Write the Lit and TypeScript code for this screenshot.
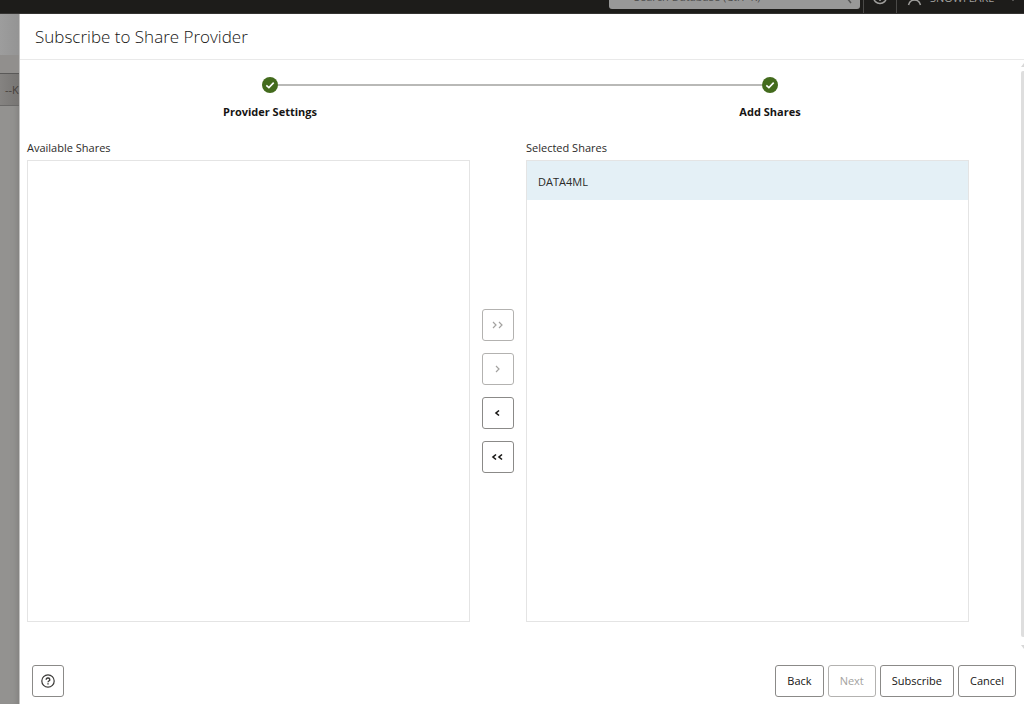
import { LitElement, html, css, svg } from "lit";
import { customElement, state } from "lit/decorators.js";

const chevron = (double: boolean, left: boolean) => {
  const one = (x: number) =>
    left ? svg`<path d="M${x + 3} 4.5 L${x} 7 L${x + 3} 9.5"/>` : svg`<path d="M${x} 4 L${x + 3} 7 L${x} 10"/>`;
  return html`<svg class=${left ? "chev" : "chev thin"} viewBox="0 0 14 14" width="14" height="14" aria-hidden="true">
    ${double ? [one(2), one(8)] : one(5)}
  </svg>`;
};

@customElement("app-topbar")
export class AppTopbar extends LitElement {
  static styles = css`
    :host {
      display: flex;
      align-items: flex-end;
      justify-content: flex-end;
      height: 14px;
      flex: none;
      overflow: hidden;
      box-sizing: border-box;
      background: #1d1c1a;
      border-bottom: 1px solid #343331;
      font: 11px/16px "Open Sans", "Noto Sans", sans-serif;
      color: #a09f9d;
    }
    .bar {
      display: flex;
      align-items: flex-end;
      height: 46px;
      flex: none;
    }
    .search {
      display: flex;
      align-items: flex-end;
      width: 251px;
      height: 32px;
      margin: 0 3px 4px 0;
      border-radius: 3px;
      background: #989898;
      box-sizing: border-box;
      padding: 0 7px 4px 25px;
    }
    .search input {
      flex: 1;
      min-width: 0;
      height: 16px;
      border: 0;
      background: none;
      padding: 0;
      font: inherit;
      outline: none;
    }
    .search input::placeholder {
      color: #4f4f4f;
      opacity: 1;
    }
    .cell {
      display: flex;
      align-items: flex-end;
      height: 100%;
      border-left: 1px solid #4b4a48;
      box-sizing: border-box;
      padding: 0 8px 8px;
    }
    .user {
      gap: 8px;
      padding: 0 6px 7px 10px;
    }
    svg {
      display: block;
      fill: none;
      stroke: currentColor;
      stroke-width: 1.5;
    }
    .name {
      width: 66px;
    }
    .caret {
      fill: currentColor;
      stroke: none;
      margin: 0 0 4px 4px;
    }
  `;
  render() {
    return html`<div class="bar">
      <label class="search">
        <input type="text" aria-label="Search Database" placeholder="Search Database (Ctrl+K)" />
        <svg width="8" height="14" viewBox="0 0 8 14"><path d="M6 12 L2 7" stroke="#555" /></svg>
      </label>
      <div class="cell">
        <svg width="16" height="16" viewBox="0 0 16 16"><circle cx="8" cy="8" r="6.5" /><path d="M6 6a2 2 0 1 1 2 2.500v1M8 10.500v1.500" /></svg>
      </div>
      <div class="cell user">
        <svg width="15" height="16" viewBox="0 0 15 16"><circle cx="7.500" cy="6" r="3.500" /><path d="M1.500 15c1-3.500 3-5 6-5s5 1.500 6 5" /></svg>
        <span class="name">SNOWFLAKE</span>
        <svg class="caret" width="10" height="6" viewBox="0 0 10 6"><path d="M1 0h8L5 5z" /></svg>
      </div>
    </div>`;
  }
}

@customElement("app-root")
export class AppRoot extends LitElement {
  @state() private available: string[] = [];
  @state() private selected: string[] = ["DATA4ML"];

  static styles = css`
    :host {
      display: flex;
      flex-direction: column;
      height: 100vh;
      overflow: hidden;
      font: 11px/16px "Open Sans", "Noto Sans", sans-serif;
      color: #2b2a28;
      background: #fff;
    }
    .body {
      flex: 1;
      min-height: 0;
      display: grid;
      grid-template-columns: 20px 1fr;
    }
    .backdrop {
      display: flex;
      flex-direction: column;
      overflow: hidden;
      background: #939290;
      box-shadow: inset -5px 0 6px -4px #7d7c7a;
      border-right: 1px solid #c4c3c2;
    }
    .back-top {
      height: 41px;
      background: linear-gradient(90deg, #9d9d9d, #949494);
    }
    .back-mid {
      height: 18px;
      background: #918f8d;
    }
    .back-row {
      height: 31px;
      border-top: 1px solid #5a5958;
      border-bottom: 1px solid #6a6968;
      background: linear-gradient(90deg, #858381, #777573);
      padding-left: 5px;
      line-height: 31px;
      white-space: nowrap;
      color: #46403b;
    }
    .drawer {
      display: flex;
      flex-direction: column;
      min-width: 0;
      min-height: 0;
      background: #fff;
    }
    header {
      height: 45px;
      flex: none;
      border-bottom: 1px solid #e9e9e9;
      padding: 0 15px;
      display: flex;
      align-items: center;
    }
    h1 {
      margin: 0;
      font-size: 17px;
      line-height: 24px;
      font-weight: 300;
      color: #161513;
    }
    .content {
      flex: 1;
      min-height: 0;
      display: grid;
      grid-template-columns: 1fr 3px;
    }
    .main {
      display: flex;
      flex-direction: column;
      min-height: 0;
    }
    .train {
      list-style: none;
      margin: 0;
      padding: 17px 1px 0 0;
      display: grid;
      grid-template-columns: 1fr 1fr;
    }
    .step {
      display: flex;
      flex-direction: column;
      gap: 11px;
      text-align: center;
      font-weight: 700;
      color: #161513;
    }
    .track {
      display: grid;
      grid-template-columns: 1fr 16px 1fr;
      align-items: center;
    }
    .line {
      height: 2px;
      background: #b9b9b7;
    }
    .disc {
      grid-column: 2;
      display: block;
    }
    .shuttle {
      flex: 1;
      min-height: 0;
      display: grid;
      grid-template-columns: 1fr 32px 1fr;
      column-gap: 12px;
      grid-template-rows: auto 1fr;
      row-gap: 4px;
      padding: 20px 52px 27px 7px;
    }
    .label {
      grid-row: 1;
    }
    .label.second {
      grid-column: 3;
    }
    .list {
      grid-row: 2;
      list-style: none;
      margin: 0;
      padding: 0;
      border: 1px solid #e4e4e4;
    }
    .option {
      height: 39px;
      line-height: 42px;
      padding: 0 11px;
      background: #e4f0f6;
    }
    .moves {
      grid-row: 2;
      grid-column: 2;
      align-self: center;
      display: flex;
      flex-direction: column;
      gap: 12px;
    }
    button {
      height: 32px;
      box-sizing: border-box;
      border: 1px solid #8b8a88;
      border-radius: 3px;
      background: #fff;
      color: #161513;
      font: inherit;
      padding: 0 11px;
      display: inline-flex;
      align-items: center;
      justify-content: center;
    }
    button:disabled {
      color: #a3a2a0;
      border-color: #b3b2b0;
    }
    .square {
      width: 32px;
      padding: 0;
    }
    .chev {
      fill: none;
      stroke: currentColor;
      stroke-width: 1.6;
    }
    .thin {
      stroke-width: 1.2;
    }
    .scroll {
      display: flex;
      flex-direction: column;
      align-items: flex-end;
      gap: 4px;
      padding: 3px 0 0;
    }
    .thumb {
      flex: 1;
      width: 3px;
      border-radius: 2px 0 0 2px;
      background: #dedede;
    }
    .arrow {
      display: block;
      fill: #d8d8d8;
    }
    .arrow.down {
      margin-top: 4px;
    }
    footer {
      flex: none;
      display: flex;
      justify-content: space-between;
      padding: 16px 8px 7px 12px;
    }
    .actions {
      display: flex;
      gap: 4px;
    }
  `;

  private disc() {
    return html`<svg class="disc" width="16" height="16" viewBox="0 0 16 16" aria-hidden="true">
      <circle cx="8" cy="8" r="8" fill="#436b1d" />
      <path d="M4.300 8.300 L6.900 10.600 L11.700 5.600" fill="none" stroke="#fff" stroke-width="1.600" />
    </svg>`;
  }

  private moveAll(toSelected: boolean) {
    const all = [...this.selected, ...this.available];
    this.selected = toSelected ? all : [];
    this.available = toSelected ? [] : all;
  }

  private list(items: string[], id: string) {
    return html`<ul class="list" role="listbox" aria-labelledby=${id} tabindex="0">
      ${items.map((s) => html`<li class="option" role="option" aria-selected="true">${s}</li>`)}
    </ul>`;
  }

  render() {
    const noLeft = !this.available.length;
    const noRight = !this.selected.length;
    return html`
      <app-topbar></app-topbar>
      <div class="body">
        <div class="backdrop" aria-hidden="true">
          <div class="back-top"></div>
          <div class="back-mid"></div>
          <div class="back-row">--K</div>
        </div>
        <section class="drawer" role="dialog" aria-labelledby="title">
          <header><h1 id="title">Subscribe to Share Provider</h1></header>
          <div class="content">
            <div class="main">
              <ol class="train">
                <li class="step">
                  <div class="track">${this.disc()}<span class="line"></span></div>
                  <span>Provider Settings</span>
                </li>
                <li class="step">
                  <div class="track"><span class="line"></span>${this.disc()}</div>
                  <span>Add Shares</span>
                </li>
              </ol>
              <div class="shuttle">
                <span class="label" id="available">Available Shares</span>
                <span class="label second" id="selected">Selected Shares</span>
                ${this.list(this.available, "available")}
                <div class="moves">
                  <button class="square" aria-label="Add all" ?disabled=${noLeft} @click=${() => this.moveAll(true)}>${chevron(true, false)}</button>
                  <button class="square" aria-label="Add" ?disabled=${noLeft} @click=${() => this.moveAll(true)}>${chevron(false, false)}</button>
                  <button class="square" aria-label="Remove" ?disabled=${noRight} @click=${() => this.moveAll(false)}>${chevron(false, true)}</button>
                  <button class="square" aria-label="Remove all" ?disabled=${noRight} @click=${() => this.moveAll(false)}>${chevron(true, true)}</button>
                </div>
                ${this.list(this.selected, "selected")}
              </div>
            </div>
            <div class="scroll" aria-hidden="true">
              <svg class="arrow" width="3" height="4" viewBox="0 0 3 4"><path d="M3 0v4H0z" /></svg>
              <div class="thumb"></div>
              <svg class="arrow down" width="3" height="4" viewBox="0 0 3 4"><path d="M0 0h3v4z" /></svg>
            </div>
          </div>
          <footer>
            <button class="square" aria-label="Help">
              <svg width="14" height="14" viewBox="0 0 14 14" fill="none" stroke="#3a3937" stroke-width="1.200">
                <circle cx="7" cy="7" r="6.200" />
                <path d="M5.200 5.700a1.800 1.600 0 1 1 2.700 1.300c-.6.400-.9.600-.9 1.300M7 9.300v1.300" stroke-width="1.400" />
              </svg>
            </button>
            <div class="actions">
              <button>Back</button>
              <button disabled>Next</button>
              <button>Subscribe</button>
              <button>Cancel</button>
            </div>
          </footer>
        </section>
      </div>
    `;
  }
}
